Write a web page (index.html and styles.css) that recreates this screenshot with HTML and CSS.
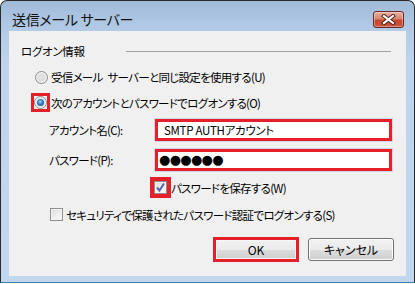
FILE: index.html
```html
<!DOCTYPE html>
<html lang="ja">
<head>
<meta charset="utf-8">
<link rel="stylesheet" href="styles.css">
</head>
<body>
<div class="window">
  <div class="titlebar">
    <span class="title">送信メール サーバー</span>
    <span class="close">
      <svg width="17" height="11" viewBox="0 0 17 11">
        <path d="M4 2 L13 9 M13 2 L4 9" stroke="#4a1a12" stroke-width="4" stroke-linecap="square" fill="none"/>
        <path d="M4 2 L13 9 M13 2 L4 9" stroke="#ffffff" stroke-width="2.2" stroke-linecap="square" fill="none"/>
      </svg>
    </span>
  </div>
  <div class="client">
    <div class="group-head"><span class="group-label">ログオン情報</span><span class="rule"></span></div>
    <div class="row radio-row r1"><span class="radio"></span><span class="txt">受信メール サーバーと同じ設定を使用する(U)</span></div>
    <div class="row radio-row r2"><span class="mark-wrap"><span class="radio checked"><span class="dot"></span></span></span><span class="txt">次のアカウントとパスワードでログオンする(O)</span></div>
    <div class="row field f1"><span class="flabel">アカウント名(C):</span><span class="input">SMTP AUTHアカウント</span></div>
    <div class="row field f2"><span class="flabel">パスワード(P):</span><span class="input pw">●●●●●●</span></div>
    <div class="row check-row c1"><span class="check checked mark4"><svg width="11" height="11" viewBox="0 0 11 11"><path d="M2 5.5 L4.5 8.5 L9 1.5" stroke="#5468a3" stroke-width="2" fill="none"/></svg></span><span class="txt">パスワードを保存する(W)</span></div>
    <div class="row check-row c2"><span class="check"></span><span class="txt">セキュリティで保護されたパスワード認証でログオンする(S)</span></div>
    <div class="row buttons"><span class="btn ok">OK</span><span class="btn cancel">キャンセル</span></div>
  </div>
</div>
</body>
</html>
```
FILE: styles.css
```css
* { box-sizing: border-box; }
html, body { margin: 0; padding: 0; background: #ffffff; }
body { font-family: "Noto Sans CJK JP", "Noto Sans", sans-serif; font-feature-settings: "palt"; color: #000; }

.window {
  width: 415px;
  height: 283px;
  border: 1px solid #2a2a2a;
  border-bottom-color: #3f7fa8;
  border-radius: 7px 7px 0 0;
  background: linear-gradient(#9fbad8 0px, #b2cae5 28px, #bdd4ec 60px, #c0d7ee 100%);
  padding-bottom: 6px;
  display: flex;
  flex-direction: column;
}

.titlebar {
  height: 30px;
  display: flex;
  align-items: flex-start;
  padding: 0 10px 0 11px;
}
.title {
  font-size: 14px;
  line-height: 16px;
  margin-top: 10px;
  letter-spacing: -0.3px;
  color: #111;
}
.close {
  margin-left: auto;
  margin-top: 10px;
  width: 31px;
  height: 17px;
  border: 1px solid #6b2a20;
  border-radius: 3px;
  background: linear-gradient(#eab0a0 0%, #d98570 45%, #c4482f 55%, #c7543a 100%);
  box-shadow: inset 0 0 0 1px rgba(255,255,255,0.35);
  display: flex;
  align-items: center;
  justify-content: center;
}
.close svg { display: block; }

.client {
  margin: 0 8px;
  flex: 1;
  background: #f0f0f0;
  font-size: 11.5px;
  letter-spacing: -0.7px;
  word-spacing: 3px;
  padding-top: 13px;
}

.row { display: flex; align-items: center; }

.group-head { display: flex; align-items: center; height: 14px; }
.group-label { margin-left: 12px; line-height: 14px; letter-spacing: -0.3px; }
.rule { margin-left: auto; margin-right: 15px; width: 265px; border-top: 1px solid #a0a0a0; }

.txt { line-height: 16px; white-space: nowrap; }

.radio-row.r1 { margin-top: 11px; height: 16px; padding-left: 26px; }
.radio-row.r2 { margin-top: 8px; height: 19px; padding-left: 25px; }
.radio-row .txt { margin-left: 3px; }
.radio-row.r2 .txt { margin-left: 4px; }

.mark-wrap { outline: 3px solid #e5202a; display: flex; flex: none; }
.radio {
  width: 13px; height: 13px;
  border-radius: 50%;
  border: 1px solid #8a8a8a;
  background: radial-gradient(circle at 50% 50%, #e6e6e6 0, #dcdcdc 40%, #f4f4f4 70%);
  display: flex; align-items: center; justify-content: center;
  flex: none;
}
.radio .dot {
  width: 7px; height: 7px; border-radius: 50%;
  background: radial-gradient(circle at 45% 40%, #a7e2ff 0, #3b8ad0 35%, #0d3c78 100%);
}

.field { height: 22px; padding-left: 40px; }
.field.f1 { margin-top: 7px; }
.field.f2 { margin-top: 8px; }
.flabel { width: 106px; line-height: 16px; white-space: nowrap; }
.input {
  width: 237px; height: 22px;
  background: #fff;
  border: 3px solid #e5202a;
  box-shadow: 0 0 0 1px #cdd8e4;
  padding-left: 6px;
  line-height: 16px;
  display: flex; align-items: center;
  white-space: pre;
  letter-spacing: -0.3px;
  word-spacing: 0;
}
.input.pw { padding-left: 1px; font-family: "DejaVu Sans", sans-serif; font-size: 13px; letter-spacing: -0.7px; }

.check-row.c1 { margin-top: 6px; height: 21px; padding-left: 145px; }
.check-row.c1 .txt { margin-left: 4px; }
.check-row.c2 { margin-top: 10px; height: 13px; padding-left: 41px; }
.check-row.c2 .txt { margin-left: 3px; }

.check {
  width: 13px; height: 13px; flex: none;
  border: 1px solid #8e8f8f;
  background: linear-gradient(135deg, #dcdcdc 0%, #f0f0f0 60%, #fbfbfb 100%);
  box-shadow: inset 0 0 0 1px #f4f4f4;
  display: flex; align-items: center; justify-content: center;
}
.check svg { display: block; }
.mark4 { outline: 4px solid #e5202a; }

.buttons { margin-top: 16px; padding-left: 204px; align-items: flex-start; }
.btn {
  width: 86px; height: 23px;
  border: 1px solid #707070;
  border-radius: 3px;
  background: linear-gradient(#f2f2f2 0%, #ebebeb 50%, #dddddd 51%, #cfcfcf 100%);
  box-shadow: inset 0 0 0 1px #fcfcfc;
  display: flex; align-items: center; justify-content: center;
  line-height: 16px;
  font-size: 12px;
  letter-spacing: 0;
}
.btn.ok { border: 3px solid #e5202a; border-radius: 0; height: 25px; box-shadow: inset 0 0 0 1px #f8f8f8; }
.btn.cancel { margin-left: 9px; margin-top: 1px; }
```
